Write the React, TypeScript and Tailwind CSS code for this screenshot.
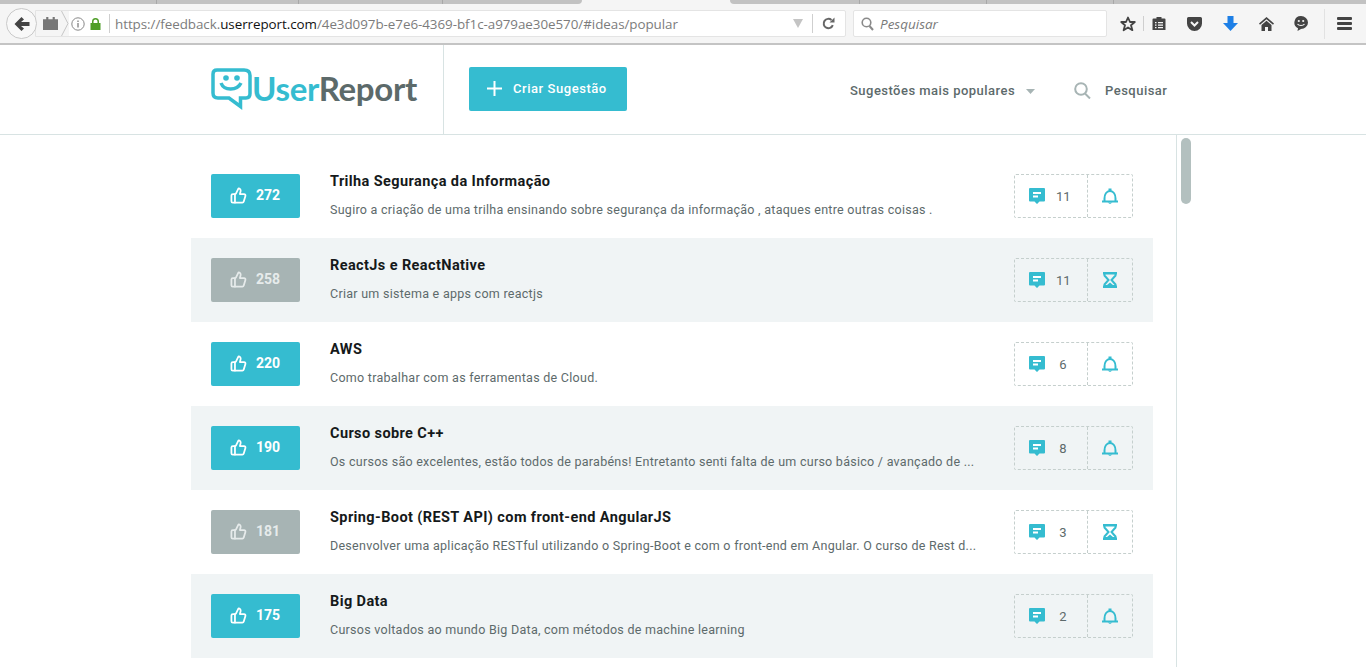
import React from "react";
import { ThumbsUp } from "lucide-react";

const ideas = [
  { votes: 272, title: "Trilha Segurança da Informação", desc: "Sugiro a criação de uma trilha ensinando sobre segurança da informação , ataques entre outras coisas .", comments: 11, wait: false },
  { votes: 258, title: "ReactJs e ReactNative", desc: "Criar um sistema e apps com reactjs", comments: 11, wait: true },
  { votes: 220, title: "AWS", desc: "Como trabalhar com as ferramentas de Cloud.", comments: 6, wait: false },
  { votes: 190, title: "Curso sobre C++", desc: "Os cursos são excelentes, estão todos de parabéns! Entretanto senti falta de um curso básico / avançado de ...", comments: 8, wait: false },
  { votes: 181, title: "Spring-Boot (REST API) com front-end AngularJS", desc: "Desenvolver uma aplicação RESTful utilizando o Spring-Boot e com o front-end em Angular. O curso de Rest d...", comments: 3, wait: true },
  { votes: 175, title: "Big Data", desc: "Cursos voltados ao mundo Big Data, com métodos de machine learning", comments: 2, wait: false },
];

function CommentIcon() {
  return (
    <svg width="16" height="16" viewBox="0 0 16 16">
      <path d="M1 0h14a1 1 0 0 1 1 1v11.500a1 1 0 0 1-1 1h-4.500L8 16l-2.500-2.500H1a1 1 0 0 1-1-1V1a1 1 0 0 1 1-1z" fill="#35bcd0" />
      <rect x="4" y="4" width="8" height="2" fill="#fff" />
      <rect x="4" y="7.500" width="5" height="2" fill="#fff" />
    </svg>
  );
}

function BellIcon() {
  return (
    <svg width="16" height="16" viewBox="0 0 16 16" fill="none">
      <path d="M2.500 13V10.500C2.500 6.500 4.500 3 8 3s5.500 3.500 5.500 7.500V13" stroke="#35bcd0" strokeWidth="2" />
      <rect x="0" y="12.500" width="16" height="2" fill="#35bcd0" />
      <rect x="6.500" y="0.500" width="3" height="3" fill="#35bcd0" />
      <path d="M5.500 14.500h5L8 16z" fill="#35bcd0" />
    </svg>
  );
}

function HourglassIcon() {
  return (
    <svg width="14" height="16" viewBox="0 0 14 16" fill="none">
      <rect x="0" y="0" width="14" height="2.500" fill="#35bcd0" />
      <rect x="0" y="13.500" width="14" height="2.500" fill="#35bcd0" />
      <path d="M1.500 2v1.500L5.500 8l-4 4.500V14h11v-1.500L8.500 8l4-4.500V2" stroke="#35bcd0" strokeWidth="2" />
      <path d="M3.500 13.500 7 10.500l3.500 3z" fill="#35bcd0" />
    </svg>
  );
}

function Row({ idea, shaded }: { idea: (typeof ideas)[number]; shaded: boolean }) {
  return (
    <div className={`flex items-center h-[84px] pl-[20px] pr-[20px] ${shaded ? "bg-[#f0f4f5]" : "bg-white"}`}>
      <div className={`flex items-center w-[89px] h-[44px] pl-[19px] pb-[2px] rounded-[2px] ${idea.wait ? "bg-[#a7b4b4] text-[#e6ebeb]" : "bg-[#35bcd0] text-white"}`}>
        <ThumbsUp size={17} strokeWidth={2.500} />
        <span className="ml-[9px] text-[14px] font-bold leading-none">{idea.votes}</span>
      </div>
      <div className="w-[650px] ml-[30px] pb-[1px] min-w-0">
        <div className="text-[14.500px] leading-[18px] font-bold text-[#15191a] tracking-[0.4px]">{idea.title}</div>
        <div className="mt-[10px] text-[12.500px] leading-[18px] text-[#5d6a6b] whitespace-nowrap tracking-[0.27px]">{idea.desc}</div>
      </div>
      <div className="ml-[34px] flex h-[44px] w-[119px] rounded-[2px] border border-dashed border-[#c5cfcd]">
        <div className="flex items-center w-[73px] pl-[14px] border-r border-dashed border-[#c5cfcd]">
          <CommentIcon />
          <span className="ml-[11px] text-[13px] text-[#5d6a6b] leading-none w-[14px] text-center">{idea.comments}</span>
        </div>
        <div className="flex-1 flex items-center justify-center">
          {idea.wait ? <HourglassIcon /> : <BellIcon />}
        </div>
      </div>
    </div>
  );
}

function BrowserBar() {
  const dark = "#444";
  return (
    <div className="shrink-0 h-[45px] flex flex-col bg-[#f5f5f5] border-b-2 border-[#c4c4c4]">
      <div className="h-[4px] flex">
        <div className="w-[582px] h-[4px] bg-[#c2c2c2] rounded-br-[8px] flex">
          <div className="w-[157px] border-r border-[#a8a8a8]" />
          <div className="w-[142px] border-r border-[#a8a8a8]" />
          <div className="w-[144px] border-r border-[#a8a8a8]" />
        </div>
        <div className="w-[148px]" />
        <div className="flex-1 h-[4px] bg-[#c2c2c2] rounded-bl-[8px] flex">
          <div className="w-[130px] border-r border-[#a8a8a8]" />
          <div className="w-[127px] border-r border-[#a8a8a8]" />
          <div className="w-[127px] border-r border-[#a8a8a8]" />
        </div>
      </div>
      <div className="flex-1 flex items-center pl-[6px] pr-[10px]">
        <div className="relative z-10 w-[31px] h-[31px] shrink-0 rounded-full bg-[#f8f8f8] border border-[#c9c9c9] flex items-center justify-center">
          <svg width="16" height="14" viewBox="0 0 16 14" fill={dark}><path d="M7.500 0 10 2.500 7 5H15.500V9H7L10 11.500 7.500 14 0.500 7z" /></svg>
        </div>
        <div className="ml-[-2px] w-[811px] h-[27px] bg-white border border-[#e4e4e4] rounded-r-[2px] flex items-center text-[14px] text-[#7c7c7c]" style={{ fontFamily: "'Open Sans', sans-serif" }}>
          <div className="h-full w-[33px] shrink-0 bg-[#f5f5f5] flex items-center pl-[7px]">
            <svg className="shrink-0" width="15" height="13" viewBox="0 0 14 12"><path d="M0 2h3V0h2v2h4V0h2v2h3v10H0z" fill="#777" /></svg>
            <svg className="ml-[3px] shrink-0" width="8" height="27" viewBox="0 0 8 27" fill="none"><path d="M0.500 1 7 13.500 0.500 26" stroke="#c6c6c6" /></svg>
          </div>
          <svg className="ml-[2px] shrink-0" width="14" height="14" viewBox="0 0 14 14" fill="none">
            <circle cx="7" cy="7" r="6.200" stroke="#888" />
            <rect x="6.300" y="6" width="1.400" height="4.500" fill="#888" />
            <rect x="6.300" y="3.500" width="1.400" height="1.500" fill="#888" />
          </svg>
          <svg className="ml-[5px] shrink-0" width="11" height="12" viewBox="0 0 11 12">
            <path d="M2 5V3.500a3.500 3.500 0 0 1 7 0V5h1.500v7H0.500V5zM3.500 5h4V3.500a2 2 0 0 0-4 0z" fill="#4f9e28" />
          </svg>
          <div className="ml-[8px] w-px h-[19px] bg-[#cfcfcf] shrink-0" />
          <div className="ml-[5px] pt-[1px] whitespace-nowrap text-[13.400px] tracking-[-0.05px]">
            https://feedback.<span className="text-[#111]">userreport.com</span>/4e3d097b-e7e6-4369-bf1c-a979ae30e570/#ideas/popular
          </div>
          <div className="flex-1" />
          <svg className="shrink-0" width="10" height="9" viewBox="0 0 10 9"><path d="M0 0h10L5 9z" fill="#c4c4c4" /></svg>
          <div className="ml-[9px] w-px h-[19px] bg-[#cfcfcf] shrink-0" />
          <svg className="ml-[9px] mr-[10px] shrink-0" width="13" height="13" viewBox="0 0 13 13" fill="none">
            <path d="M10.800 8.200A4.700 4.700 0 1 1 9.500 3" stroke="#666" strokeWidth="2" />
            <path d="M7.500 5.500h5v-5z" fill="#666" />
          </svg>
        </div>
        <div className="ml-[7px] w-[254px] h-[27px] bg-white border border-[#e4e4e4] rounded-[2px] flex items-center pl-[7px] text-[13.500px] italic text-[#7a7a7a]" style={{ fontFamily: "'Open Sans', sans-serif" }}>
          <svg width="13" height="14" viewBox="0 0 13 14" fill="none">
            <circle cx="5.500" cy="5.500" r="4.300" stroke="#8a8a8a" strokeWidth="1.600" />
            <path d="M8.500 9 12 13" stroke="#8a8a8a" strokeWidth="2" />
          </svg>
          <span className="ml-[6px] pt-[1px]">Pesquisar</span>
        </div>
        <svg className="ml-[13px]" width="16" height="16" viewBox="0 0 16 16" fill="none">
          <path d="M8 1.500 10 6h4.800l-3.800 3.200 1.400 5L8 11.500l-4.400 2.700 1.400-5L1.200 6H6z" stroke={dark} strokeWidth="1.800" strokeLinejoin="round" />
        </svg>
        <div className="ml-[7px] w-px h-[15px] bg-[#cfcfcf]" />
        <svg className="ml-[8px]" width="14" height="15" viewBox="0 0 14 15">
          <path d="M1.500 2.500H4.500V1H9.500V2.500H12.500A1 1 0 0 1 13.500 3.500V14H0.500V3.500A1 1 0 0 1 1.500 2.500z" fill={dark} />
          <path d="M3 6h1.500v1.300H3zM6 6h5v1.300H6zM3 8.500h1.500v1.300H3zM6 8.500h5v1.300H6zM3 11h1.500v1.300H3zM6 11h5v1.300H6z" fill="#f5f5f5" />
        </svg>
        <svg className="ml-[21px]" width="15" height="14" viewBox="0 0 15 14">
          <path d="M1.500 0h12A1.500 1.500 0 0 1 15 1.500V6.500A7.500 7.500 0 0 1 0 6.500V1.500A1.500 1.500 0 0 1 1.500 0z" fill={dark} />
          <path d="M4 5l3.500 3.500L11 5" fill="none" stroke="#f5f5f5" strokeWidth="2" />
        </svg>
        <svg className="ml-[21px]" width="15" height="15" viewBox="0 0 15 15">
          <path d="M4.500 0h6v7H15L7.500 15 0 7h4.500z" fill="#1d7fe6" />
        </svg>
        <svg className="ml-[21px]" width="15" height="14" viewBox="0 0 15 14">
          <path d="M7.500 0 15 6.500 14 7.800 7.500 2.300 1 7.800 0 6.500z" fill={dark} />
          <path d="M2.500 8 7.500 3.800 12.500 8V14H9V10H6V14H2.500z" fill={dark} />
        </svg>
        <svg className="ml-[20px]" width="14" height="15" viewBox="0 0 14 15">
          <path d="M7 0a7 6.500 0 0 1 0 13l-3.500 2 .5-2.700A6.500 6.500 0 0 1 7 0z" fill={dark} />
          <circle cx="4.800" cy="5" r="1.100" fill="#f5f5f5" />
          <circle cx="9.200" cy="5" r="1.100" fill="#f5f5f5" />
          <path d="M3.500 8c1.500 2 5.500 2 7 0" stroke="#f5f5f5" strokeWidth="1.200" fill="none" />
        </svg>
        <div className="ml-[16px] w-px h-[30px] bg-[#e2e2e2]" />
        <svg className="ml-[12px]" width="15" height="13" viewBox="0 0 15 13" fill={dark}>
          <rect width="15" height="3" rx="1" />
          <rect y="5" width="15" height="3" rx="1" />
          <rect y="10" width="15" height="3" rx="1" />
        </svg>
      </div>
    </div>
  );
}

function Header() {
  return (
    <div className="shrink-0 h-[90px] flex border-b border-[#d8e3e3] bg-white">
      <div className="w-[444px] pl-[211px] pb-[2px] border-r border-[#d8e3e3] flex items-center">
        <svg width="44" height="42" viewBox="0 0 44 42" fill="none" className="shrink-0">
          <path d="M6 2H33C37 2 39 4 39 7.500V25.500C39 28 38 30 35 30H29.500L29.500 38.500 18 30H7C3.500 30 2 28 2 25V6C2 3.500 3.500 2 6 2z" stroke="#35bcd0" strokeWidth="3.500" />
          <circle cx="15" cy="10" r="2.800" fill="#35bcd0" />
          <circle cx="26" cy="10" r="2.800" fill="#35bcd0" />
          <path d="M10 15c3 8 16 8 20 0" stroke="#35bcd0" strokeWidth="3.500" />
        </svg>
        <div className="ml-[-3px] text-[33px] leading-none font-bold tracking-[-0.3px] whitespace-nowrap" style={{ fontFamily: "Lato, sans-serif" }}>
          <span className="text-[#35bcd0]">User</span>
          <span className="text-[#5c6a6a]">Report</span>
        </div>
      </div>
      <div className="pl-[25px] pb-[2px] flex items-center">
        <div className="w-[158px] h-[44px] rounded-[2px] bg-[#35bcd0] flex items-center pl-[18px] text-white">
          <svg width="15" height="15" viewBox="0 0 15 15" fill="#fff">
            <rect x="6.500" width="2" height="15" />
            <rect y="6.500" width="15" height="2" />
          </svg>
          <span className="ml-[11px] text-[13px] font-medium tracking-[0.55px]">Criar Sugestão</span>
        </div>
      </div>
      <div className="ml-[223px] pt-[2px] flex items-center text-[13px] font-medium text-[#5d6a6b] tracking-[0.47px]">
        <span>Sugestões mais populares</span>
        <svg className="ml-[11px] mt-[2px]" width="9" height="5" viewBox="0 0 9 5"><path d="M0 0h9L4.500 5z" fill="#a7b4b4" /></svg>
        <svg className="ml-[39px]" width="17" height="17" viewBox="0 0 17 17" fill="none">
          <circle cx="7" cy="7" r="5.800" stroke="#a7b4b4" strokeWidth="2" />
          <path d="M11 11.500 16 16.500" stroke="#a7b4b4" strokeWidth="2" />
        </svg>
        <span className="ml-[14px]">Pesquisar</span>
      </div>
    </div>
  );
}

export default function App() {
  return (
    <div className="w-[1366px] h-[667px] overflow-hidden flex flex-col bg-white" style={{ fontFamily: "Roboto, sans-serif" }}>
      <BrowserBar />
      <Header />
      <div className="flex-1 flex min-h-0">
        <div className="w-[1177px] shrink-0 border-r border-[#d8e3e3] pl-[191px] pr-[23px] pt-[19px] overflow-hidden">
          {ideas.map((idea, i) => (
            <Row key={idea.title} idea={idea} shaded={i % 2 === 1} />
          ))}
        </div>
        <div className="flex-1 pl-[4px] pt-[3px]">
          <div className="w-[10px] h-[66px] rounded-[5px] bg-[#b3c0bf]" />
        </div>
      </div>
    </div>
  );
}
